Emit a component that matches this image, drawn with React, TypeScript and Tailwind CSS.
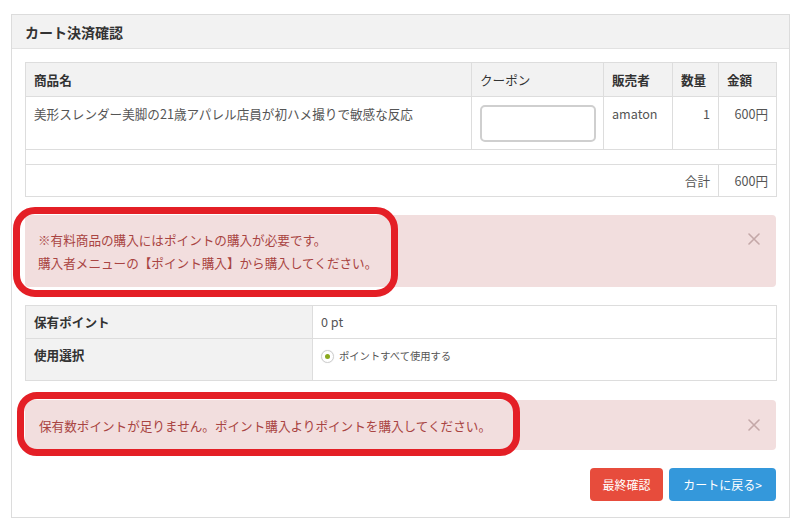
import React from "react";

const F = { fontFamily: '"Noto Sans CJK JP", "Noto Sans", sans-serif' };

function CloseX() {
  return (
    <svg width="12" height="12" viewBox="0 0 12 12" className="shrink-0">
      <path d="M1 1 L11 11 M11 1 L1 11" stroke="#c4a8a8" strokeWidth="1.6" strokeLinecap="round" />
    </svg>
  );
}

export default function App() {
  return (
    <div className="relative w-[800px] h-[524px] bg-white pt-[14px] pl-[11px] pr-[10px] text-[#555]" style={F}>
      <div className="border border-[#dcdcdc] bg-white h-[504px]">
        <div className="h-[34px] bg-[#f2f2f2] border-b border-[#e2e2e2] px-[13px] flex items-center">
          <span className="text-[14px] font-bold text-[#333] leading-none">カート決済確認</span>
        </div>
        <div className="px-[13px] pt-[13px]">
          <table className="w-[751px] border-collapse table-fixed text-[12.6px] leading-[17px]">
            <colgroup>
              <col className="w-[446px]" />
              <col className="w-[132px]" />
              <col className="w-[69px]" />
              <col className="w-[46px]" />
              <col className="w-[58px]" />
            </colgroup>
            <thead>
              <tr className="h-[34px] bg-[#f2f2f2] text-[#333] font-bold">
                <th className="border border-[#dddddd] px-[8px] text-left align-middle font-bold">商品名</th>
                <th className="border border-[#dddddd] px-[8px] text-left align-middle font-normal">クーポン</th>
                <th className="border border-[#dddddd] px-[8px] text-left align-middle font-bold">販売者</th>
                <th className="border border-[#dddddd] px-[8px] text-left align-middle font-bold">数量</th>
                <th className="border border-[#dddddd] px-[8px] text-left align-middle font-bold">金額</th>
              </tr>
            </thead>
            <tbody>
              <tr className="h-[53px]">
                <td className="border border-[#dddddd] px-[8px] pt-[8px] align-top whitespace-nowrap">美形スレンダー美脚の21歳アパレル店員が初ハメ撮りで敏感な反応</td>
                <td className="border border-[#dddddd] px-[8px] pt-[8px] pb-[7px] align-top">
                  <div className="w-[116px] h-[37px] rounded-[5px] border-2 border-[#cfcfcf] bg-white" />
                </td>
                <td className="border border-[#dddddd] px-[8px] pt-[8px] align-top">amaton</td>
                <td className="border border-[#dddddd] px-[8px] pt-[8px] align-top text-right">1</td>
                <td className="border border-[#dddddd] px-[8px] pt-[8px] align-top text-right">600円</td>
              </tr>
              <tr className="h-[15px]">
                <td colSpan={5} className="border border-[#dddddd] p-0" />
              </tr>
              <tr className="h-[32px]">
                <td colSpan={4} className="border border-[#dddddd] px-[8px] text-right align-middle">合計</td>
                <td className="border border-[#dddddd] px-[8px] text-right align-middle">600円</td>
              </tr>
            </tbody>
          </table>

          <div className="mt-[18px] h-[72px] rounded-[4px] bg-[#f2dede] text-[#a94442] text-[12.6px] leading-[23px] pl-[13px] pr-[16px] py-[13px] flex justify-between">
            <div>
              <div>※有料商品の購入にはポイントの購入が必要です。</div>
              <div>購入者メニューの【ポイント購入】から購入してください。</div>
            </div>
            <div className="pt-[5px]"><CloseX /></div>
          </div>

          <table className="mt-[18px] w-[751px] border-collapse table-fixed text-[12.6px] leading-[17px]">
            <colgroup>
              <col className="w-[287px]" />
              <col className="w-[464px]" />
            </colgroup>
            <tbody>
              <tr className="h-[33px]">
                <td className="border border-[#dddddd] bg-[#f2f2f2] px-[8px] pt-[7px] align-top font-bold text-[#333]">保有ポイント</td>
                <td className="border border-[#dddddd] px-[8px] pt-[7px] align-top">0 pt</td>
              </tr>
              <tr className="h-[42px]">
                <td className="border border-[#dddddd] bg-[#f2f2f2] px-[8px] pt-[7px] align-top font-bold text-[#333]">使用選択</td>
                <td className="border border-[#dddddd] px-[8px] pt-[10px] align-top">
                  <div className="flex items-center gap-[5px]">
                    <span className="w-[13px] h-[13px] rounded-full border border-[#d0d0d0] bg-white flex items-center justify-center shadow-[0_0_1px_rgba(0,0,0,0.15)]">
                      <span className="w-[5px] h-[5px] rounded-full bg-[#8aa81e]" />
                    </span>
                    <span className="text-[10.3px] leading-[14px] text-[#555]">ポイントすべて使用する</span>
                  </div>
                </td>
              </tr>
            </tbody>
          </table>

          <div className="mt-[19px] h-[50px] rounded-[4px] bg-[#f2dede] text-[#a94442] text-[12.6px] leading-[23px] pl-[14px] pr-[16px] flex items-center justify-between">
            <div>保有数ポイントが足りません。ポイント購入よりポイントを購入してください。</div>
            <CloseX />
          </div>

          <div className="mt-[18px] flex justify-end gap-[6px]">
            <div className="w-[73px] h-[33px] rounded-[4px] bg-[#e74c3c] text-white text-[12px] flex items-center justify-center">最終確認</div>
            <div className="w-[107px] h-[33px] rounded-[4px] bg-[#3498db] text-white text-[12px] flex items-center justify-center">カートに戻る&gt;</div>
          </div>
        </div>
      </div>

      <div className="absolute left-[13px] top-[207px] w-[385px] h-[90px] rounded-[22px] border-[7px] border-[#e41f26] pointer-events-none" />
      <div className="absolute left-[17px] top-[392px] w-[503px] h-[64px] rounded-[20px] border-[7px] border-[#e41f26] pointer-events-none" />
    </div>
  );
}
